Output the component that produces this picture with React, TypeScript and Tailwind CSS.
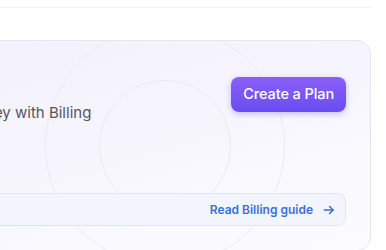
import React from "react";

function ArrowRight() {
  return (
    <svg width="14" height="14" viewBox="0 0 24 24" fill="none" stroke="currentColor" strokeWidth="2.75" strokeLinecap="round" strokeLinejoin="round">
      <path d="M4 12h15" />
      <path d="M13 6l6 6-6 6" />
    </svg>
  );
}

export default function App() {
  return (
    <div className="w-[386px] h-[250px] overflow-hidden bg-white" style={{ fontFamily: "Inter, 'Noto Sans', sans-serif" }}>
      <div className="-ml-[315px] w-[686px]">
        {/* page header strip */}
        <div className="h-[8px] border-b border-[#f1f1f4]" />

        {/* billing card */}
        <div className="relative mt-[32px] overflow-hidden rounded-[14px] border border-[#e7e5f3] bg-gradient-to-br from-[#f1f0fc] via-[#f6f5fd] to-[#fcfcff] px-6 pb-6">
          <div className="pointer-events-none absolute left-[359px] top-[-15px] h-[240px] w-[240px] rounded-full border border-[#ebe9f4]" />
          <div className="pointer-events-none absolute left-[413px] top-[39px] h-[132px] w-[132px] rounded-full border border-[#ebe9f4]" />

          <div className="relative mt-[13px] flex h-[80px] items-center justify-between">
            <div className="flex flex-col gap-3">
              <h3 className="text-[17px] font-semibold text-[#18181b]">Billing</h3>
              <p className="whitespace-nowrap text-[15px] text-[#55555f]">Start accepting payments and earn money with Billing</p>
            </div>
            <button className="h-[35px] rounded-[8px] bg-gradient-to-b from-[#8b5ff7] to-[#6a4cf1] px-[12px] text-[14.5px] font-medium tracking-[-0.1px] text-white shadow-[0_2px_6px_rgba(106,76,241,0.35)]">
              Create a Plan
            </button>
          </div>

          <div className="relative mt-[59px] flex h-[33px] items-center justify-end rounded-[8px] border border-[#e0e6f5] bg-[#f2f5fd] px-[9px]">
            <a className="flex items-center gap-[9px] text-[12px] font-semibold text-[#3d6fd2]">
              Read Billing guide
              <ArrowRight />
            </a>
          </div>
        </div>
      </div>
    </div>
  );
}
